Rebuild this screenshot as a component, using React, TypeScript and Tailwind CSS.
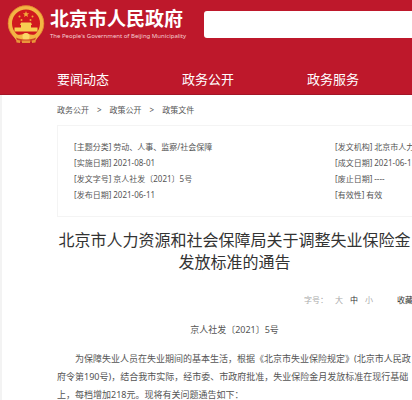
import { useState } from "react";

const navItems = ["要闻动态", "政务公开", "政务服务"];

const crumbs = ["政务公开", "政策公开", "政策文件"];

const metaLeft = [
  { label: "主题分类", value: "劳动、人事、监察/社会保障" },
  { label: "实施日期", value: "2021-08-01" },
  { label: "发文字号", value: "京人社发〔2021〕5号" },
  { label: "发布日期", value: "2021-06-11" },
];

const metaRight = [
  { label: "发文机构", value: "北京市人力资源和社会保障局" },
  { label: "成文日期", value: "2021-06-11" },
  { label: "废止日期", value: "----" },
  { label: "有效性", value: "有效" },
];

const sizes = ["大", "中", "小"];

function Emblem() {
  return (
    <svg viewBox="0 0 38 40" className="h-10 w-[38px] shrink-0" aria-hidden="true">
      <circle cx="19" cy="19.5" r="16" fill="#d0191e" stroke="#f3b544" strokeWidth="4" />
      <circle cx="19" cy="19.5" r="17.8" fill="none" stroke="#e2802c" strokeWidth="0.8" />
      <path
        d="M19 7l.9 2.200 2.300.1-1.800 1.500.6 2.300-2-1.300-2 1.300.6-2.300-1.800-1.500 2.300-.1z"
        fill="#f2a93a"
      />
      <circle cx="12.5" cy="12.5" r="1" fill="#f2a93a" />
      <circle cx="25.5" cy="12.500" r="1" fill="#f2a93a" />
      <circle cx="14.500" cy="16" r="1" fill="#f2a93a" />
      <circle cx="23.500" cy="16" r="1" fill="#f2a93a" />
      <path d="M14 18.5h10l1 2.500h-1v2.500h6.500v4h-23v-4H14V21h-1z" fill="#f8cd52" />
      <path d="M5 30c5 1.500 9 1 14-1 5 2 9 2.500 14 1l-4 6H9z" fill="#f3b544" />
      <circle cx="19" cy="32.500" r="3.500" fill="#fbd768" />
      <path d="M9 33.500c3 1.500 6 2 10 2s7-.5 10-2l-1.500 4c-5 1-12 1-17 0z" fill="#cf4526" />
      <path d="M9 35.500l4 1v2.500l-3.500-.5zM29 35.500l-4 1v2.500l3.500-.5zM15 36.500h8v2.500h-8z" fill="#e9963a" />
    </svg>
  );
}

function MetaList({ rows }: { rows: { label: string; value: string }[] }) {
  return (
    <dl>
      {rows.map((row) => (
        <div key={row.label} className="flex gap-[2px] whitespace-nowrap">
          <dt>[{row.label}]</dt>
          <dd>{row.value}</dd>
        </div>
      ))}
    </dl>
  );
}

export default function App() {
  const [size, setSize] = useState("中");

  return (
    <div
      lang="zh-CN"
      className="min-h-screen overflow-hidden bg-[#f3f3f3] font-['Noto_Sans','Noto_Sans_CJK_SC',sans-serif] text-[#555]"
    >
      <header className="bg-[#be182b] text-white">
        <div className="flex h-12 items-center pl-[7px]">
          <a href="#" className="flex items-center gap-[5px] whitespace-nowrap">
            <Emblem />
            <span className="flex w-[154px] flex-col">
              <span className="text-[19px] leading-6 font-bold">北京市人民政府</span>
              <span className="text-[6px] leading-[10px] text-[#f6cfd3]">
                The People's Government of Beijing Municipality
              </span>
            </span>
          </a>
          <input
            type="search"
            aria-label="搜索"
            className="h-[27px] min-w-0 flex-1 rounded-l-[3px] bg-white px-2 text-xs text-[#333] outline-none"
          />
        </div>
        <nav className="flex h-[47px] gap-[73px] border-b border-[#a31527] pt-[22px] pl-[57px] text-[13px] leading-[18px] whitespace-nowrap">
          {navItems.map((item) => (
            <a key={item} href="#">
              {item}
            </a>
          ))}
        </nav>
      </header>

      <main className="ml-[2px] bg-white pl-[55px]">
        <nav
          aria-label="当前位置"
          className="flex h-[30px] items-center gap-2 text-[8px] leading-4 whitespace-nowrap"
        >
          {crumbs.map((crumb, index) => (
            <span key={crumb} className="flex gap-2">
              {index > 0 && <span>&gt;</span>}
              <a href="#">{crumb}</a>
            </span>
          ))}
        </nav>

        <section className="grid grid-cols-[261px_1fr] border border-r-0 border-[#f4f4f4] py-[13px] pl-4 text-[8px] leading-4">
          <MetaList rows={metaLeft} />
          <MetaList rows={metaRight} />
        </section>

        <article>
          <h1 className="pt-3 text-center text-base leading-[22px] whitespace-nowrap text-[#333]">
            北京市人力资源和社会保障局关于调整失业保险金
            <br />
            发放标准的通告
          </h1>

          <div className="flex pt-[19px] pl-[247px] text-[8px] leading-4 whitespace-nowrap text-[#aaa]">
            <span>字号：</span>
            <div className="flex gap-[7px] pl-[7px]">
              {sizes.map((item) => (
                <button
                  key={item}
                  type="button"
                  onClick={() => setSize(item)}
                  className={item === size ? "text-[#333]" : "text-[#aaa]"}
                >
                  {item}
                </button>
              ))}
            </div>
            <button type="button" className="ml-6 text-[#333]">
              收藏
            </button>
          </div>

          <div className="pt-[13px] text-[9px] leading-[18px] whitespace-nowrap">
            <p className="text-center">京人社发〔2021〕5号</p>
            <p className="pt-[11px] indent-[18px]">
              为保障失业人员在失业期间的基本生活，根据《北京市失业保险规定》(北京市人民政
              <br />
              府令第190号)，结合我市实际，经市委、市政府批准，失业保险金月发放标准在现行基础
              <br />
              上，每档增加218元。现将有关问题通告如下：
            </p>
          </div>
        </article>
      </main>
    </div>
  );
}
